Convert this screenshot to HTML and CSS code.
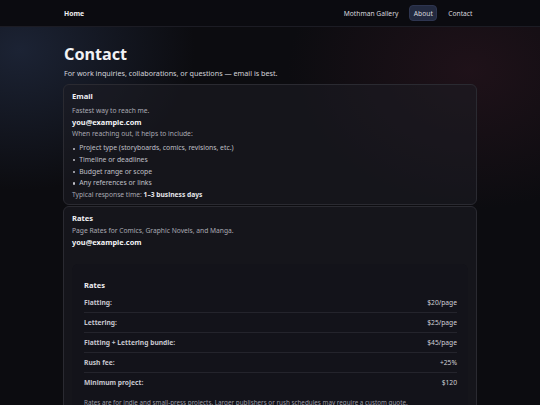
FILE: index.html
```html
<!DOCTYPE html>
<html lang="en">
<head>
<meta charset="utf-8">
<title>Contact</title>
<link rel="stylesheet" href="styles.css">
</head>
<body>
<header class="nav">
  <div class="nav-inner">
    <a class="brand" href="#">Home</a>
    <nav class="links">
      <a href="#">Mothman Gallery</a>
      <a href="#" class="active">About</a>
      <a href="#">Contact</a>
    </nav>
  </div>
</header>
<main class="main">
  <h1 class="title">Contact</h1>
  <p class="lead">For work inquiries, collaborations, or questions — email is best.</p>

  <section class="card">
    <h2 class="card-title">Email</h2>
    <p class="muted">Fastest way to reach me.</p>
    <p class="email">you@example.com</p>
    <p class="muted">When reaching out, it helps to include:</p>
    <ul class="list">
      <li>Project type (storyboards, comics, revisions, etc.)</li>
      <li>Timeline or deadlines</li>
      <li>Budget range or scope</li>
      <li>Any references or links</li>
    </ul>
    <p class="muted small">Typical response time: <strong>1–3 business days</strong></p>
  </section>

  <section class="card card-rates">
    <h2 class="card-title">Rates</h2>
    <p class="muted">Page Rates for Comics, Graphic Novels, and Manga.</p>
    <p class="email">you@example.com</p>

    <div class="rates">
      <h3 class="rates-title">Rates</h3>
      <div class="row"><span class="label">Flatting:</span><span class="val">$20/page</span></div>
      <div class="row"><span class="label">Lettering:</span><span class="val">$25/page</span></div>
      <div class="row"><span class="label">Flatting + Lettering bundle:</span><span class="val">$45/page</span></div>
      <div class="row"><span class="label">Rush fee:</span><span class="val">+25%</span></div>
      <div class="row"><span class="label">Minimum project:</span><span class="val">$120</span></div>
      <p class="note">Rates are for indie and small-press projects. Larger publishers or rush schedules may require a custom quote.</p>
    </div>
  </section>
</main>
</body>
</html>
```

FILE: styles.css
```css
* { box-sizing: border-box; }
html, body { margin: 0; padding: 0; }
body {
  font-family: "Noto Sans", "Open Sans", sans-serif;
  color: #e6e6ea;
  min-height: 405px;
  background:
    radial-gradient(ellipse 250px 200px at 20px 50px, rgba(38, 50, 76, 0.6), transparent 70%),
    radial-gradient(ellipse 260px 200px at 470px 70px, rgba(66, 28, 42, 0.35), transparent 70%),
    #0c0c10;
}
a { text-decoration: none; color: inherit; }

.nav {
  height: 27px;
  background: #0b0b10;
  border-bottom: 1px solid #1c1c24;
}
.nav-inner {
  width: 414px;
  margin: 0 auto;
  height: 100%;
  display: flex;
  align-items: center;
  justify-content: space-between;
}
.brand { font-size: 6.8px; font-weight: 700; color: #f0f0f4; padding-left: 1px; }
.links { display: flex; gap: 6.5px; align-items: center; }
.links a {
  font-size: 6.7px;
  line-height: 9px;
  color: #d8d8de;
  padding: 2.4px 3.5px;
  border-radius: 4px;
  border: 1px solid transparent;
}
.links a.active { background: #232a40; border-color: #2e3550; }

.main {
  width: 414px;
  margin: 0 auto;
  padding-top: 16px;
}
.title {
  margin: 0 0 0 1px;
  font-size: 16.2px;
  font-weight: 700;
  line-height: 22px;
  color: #f2f2f5;
}
.lead {
  margin: 3.4px 0 5.6px 1px;
  font-size: 7.2px;
  line-height: 10px;
  color: #d4d4da;
}
.card {
  background: rgba(30, 30, 36, 0.55);
  border: 1px solid #2a2a31;
  border-radius: 6px;
  padding: 5.5px 8px 4.5px 8px;
  margin-bottom: 0.5px;
}
.card-title {
  margin: 0 0 3px 0;
  font-size: 7.6px;
  line-height: 12px;
  font-weight: 700;
  color: #f0f0f4;
}
.card-rates { padding-top: 5px; }
.card-rates .card-title { margin-bottom: 1.5px; }
.muted {
  margin: 0;
  font-size: 6.7px;
  line-height: 11.5px;
  color: #a9a9b2;
}
.email {
  margin: 0;
  font-size: 7.4px;
  line-height: 11.5px;
  font-weight: 700;
  color: #f4f4f7;
}
.list {
  list-style: none;
  margin: 2.5px 0 0 0;
  padding-left: 0;
  font-size: 6.8px;
  line-height: 11.6px;
  color: #c0c0c8;
}
.list li::before {
  content: "";
  display: inline-block;
  width: 2.2px;
  height: 2.2px;
  border-radius: 50%;
  background: #c0c0c8;
  vertical-align: middle;
  margin: 0 4px 0 1px;
}
.small { line-height: 11px; }
.small strong { color: #e6e6ea; font-weight: 700; }

.rates {
  margin: 16px 0 4px 0;
  background: #13131a;
  border-radius: 6px;
  padding: 15px 11px 8px 12px;
}
.rates-title {
  margin: 0 0 1.8px 0;
  font-size: 7.5px;
  line-height: 12px;
  font-weight: 700;
  color: #f0f0f4;
}
.row {
  display: flex;
  justify-content: space-between;
  align-items: center;
  height: 19.85px;
  font-size: 6.7px;
  border-bottom: 1px solid #24242c;
}
.row:last-of-type { border-bottom: none; }
.label { font-weight: 700; color: #c6c6ce; }
.val { color: #d0d0d6; }
.note {
  margin: 5.5px 0 0 0;
  font-size: 6.3px;
  line-height: 10px;
  color: #9a9aa4;
}
```
